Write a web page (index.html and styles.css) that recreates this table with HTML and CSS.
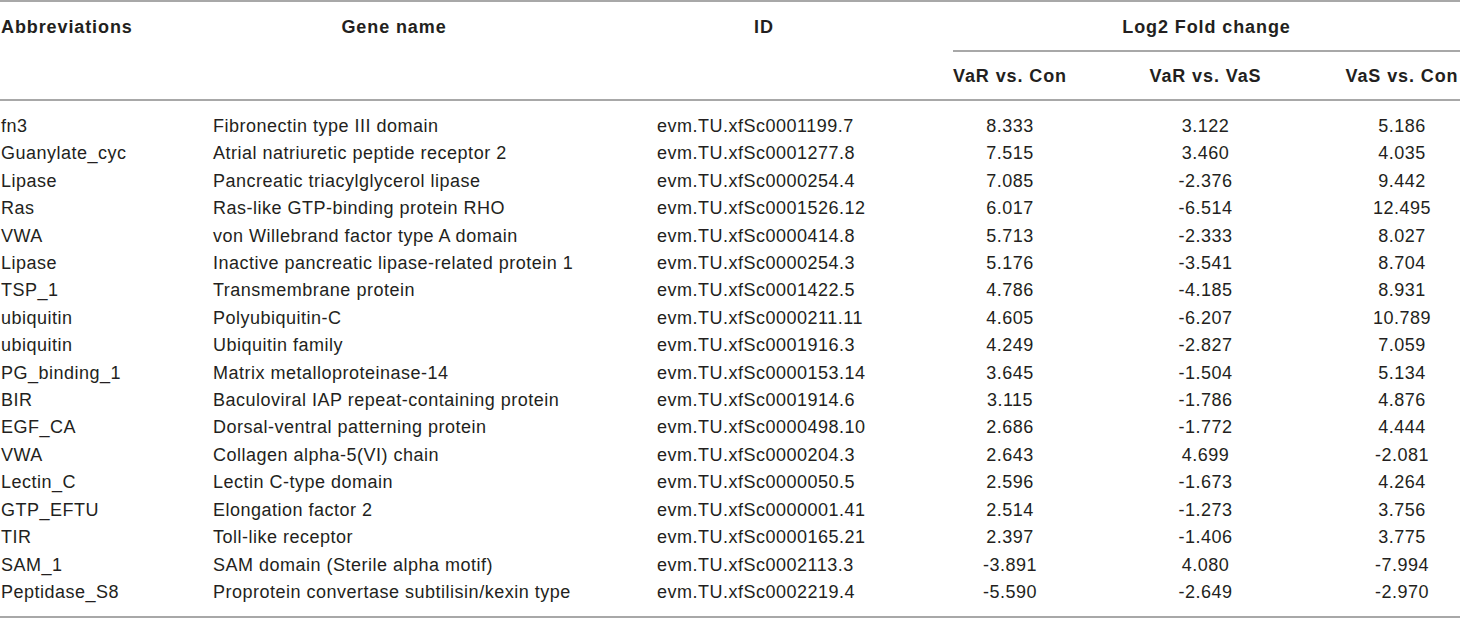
FILE: index.html
```html
<!DOCTYPE html>
<html lang="en">
<head>
    <meta charset="utf-8">
    <title>Differentially expressed genes</title>
    <link rel="stylesheet" href="styles.css">
</head>
<body>

<!-- Gene table -->
<table class="gene-table">
    <colgroup>
        <col class="c-abbr">
        <col class="c-name">
        <col class="c-id">
        <col class="c-fc1">
        <col class="c-fc2">
        <col class="c-fc3">
    </colgroup>
    <thead>
        <tr class="head-top">
            <th rowspan="2" class="abbr">Abbreviations</th>
            <th rowspan="2">Gene name</th>
            <th rowspan="2">ID</th>
            <th colspan="3" class="group">Log2 Fold change</th>
        </tr>
        <tr class="head-sub">
            <th>VaR vs. Con</th>
            <th>VaR vs. VaS</th>
            <th>VaS vs. Con</th>
        </tr>
    </thead>
    <tbody>
        <tr><td class="abbr">fn3</td><td>Fibronectin type III domain</td><td class="id">evm.TU.xfSc0001199.7</td><td class="num">8.333</td><td class="num">3.122</td><td class="num">5.186</td></tr>
        <tr><td class="abbr">Guanylate_cyc</td><td>Atrial natriuretic peptide receptor 2</td><td class="id">evm.TU.xfSc0001277.8</td><td class="num">7.515</td><td class="num">3.460</td><td class="num">4.035</td></tr>
        <tr><td class="abbr">Lipase</td><td>Pancreatic triacylglycerol lipase</td><td class="id">evm.TU.xfSc0000254.4</td><td class="num">7.085</td><td class="num">-2.376</td><td class="num">9.442</td></tr>
        <tr><td class="abbr">Ras</td><td>Ras-like GTP-binding protein RHO</td><td class="id">evm.TU.xfSc0001526.12</td><td class="num">6.017</td><td class="num">-6.514</td><td class="num">12.495</td></tr>
        <tr><td class="abbr">VWA</td><td>von Willebrand factor type A domain</td><td class="id">evm.TU.xfSc0000414.8</td><td class="num">5.713</td><td class="num">-2.333</td><td class="num">8.027</td></tr>
        <tr><td class="abbr">Lipase</td><td>Inactive pancreatic lipase-related protein 1</td><td class="id">evm.TU.xfSc0000254.3</td><td class="num">5.176</td><td class="num">-3.541</td><td class="num">8.704</td></tr>
        <tr><td class="abbr">TSP_1</td><td>Transmembrane protein</td><td class="id">evm.TU.xfSc0001422.5</td><td class="num">4.786</td><td class="num">-4.185</td><td class="num">8.931</td></tr>
        <tr><td class="abbr">ubiquitin</td><td>Polyubiquitin-C</td><td class="id">evm.TU.xfSc0000211.11</td><td class="num">4.605</td><td class="num">-6.207</td><td class="num">10.789</td></tr>
        <tr><td class="abbr">ubiquitin</td><td>Ubiquitin family</td><td class="id">evm.TU.xfSc0001916.3</td><td class="num">4.249</td><td class="num">-2.827</td><td class="num">7.059</td></tr>
        <tr><td class="abbr">PG_binding_1</td><td>Matrix metalloproteinase-14</td><td class="id">evm.TU.xfSc0000153.14</td><td class="num">3.645</td><td class="num">-1.504</td><td class="num">5.134</td></tr>
        <tr><td class="abbr">BIR</td><td>Baculoviral IAP repeat-containing protein</td><td class="id">evm.TU.xfSc0001914.6</td><td class="num">3.115</td><td class="num">-1.786</td><td class="num">4.876</td></tr>
        <tr><td class="abbr">EGF_CA</td><td>Dorsal-ventral patterning protein</td><td class="id">evm.TU.xfSc0000498.10</td><td class="num">2.686</td><td class="num">-1.772</td><td class="num">4.444</td></tr>
        <tr><td class="abbr">VWA</td><td>Collagen alpha-5(VI) chain</td><td class="id">evm.TU.xfSc0000204.3</td><td class="num">2.643</td><td class="num">4.699</td><td class="num">-2.081</td></tr>
        <tr><td class="abbr">Lectin_C</td><td>Lectin C-type domain</td><td class="id">evm.TU.xfSc0000050.5</td><td class="num">2.596</td><td class="num">-1.673</td><td class="num">4.264</td></tr>
        <tr><td class="abbr">GTP_EFTU</td><td>Elongation factor 2</td><td class="id">evm.TU.xfSc0000001.41</td><td class="num">2.514</td><td class="num">-1.273</td><td class="num">3.756</td></tr>
        <tr><td class="abbr">TIR</td><td>Toll-like receptor</td><td class="id">evm.TU.xfSc0000165.21</td><td class="num">2.397</td><td class="num">-1.406</td><td class="num">3.775</td></tr>
        <tr><td class="abbr">SAM_1</td><td>SAM domain (Sterile alpha motif)</td><td class="id">evm.TU.xfSc0002113.3</td><td class="num">-3.891</td><td class="num">4.080</td><td class="num">-7.994</td></tr>
        <tr><td class="abbr">Peptidase_S8</td><td>Proprotein convertase subtilisin/kexin type</td><td class="id">evm.TU.xfSc0002219.4</td><td class="num">-5.590</td><td class="num">-2.649</td><td class="num">-2.970</td></tr>
    </tbody>
</table>

</body>
</html>
```

FILE: styles.css
```css
/* General Layout */
body {
    margin: 0;
    padding: 0;
    background: #ffffff;
    color: #231f20;
    font-family: 'Liberation Sans', Arial, Helvetica, sans-serif;
}

/* Table */
.gene-table {
    width: 1460px;
    table-layout: fixed;
    border-collapse: collapse;
    border-top: 2px solid #a8a8a8;
    border-bottom: 2px solid #a8a8a8;
    font-size: 18px;
    letter-spacing: 0.5px;
    line-height: 27.4px;
}

.c-abbr { width: 213px; }
.c-name { width: 362px; }
.c-id { width: 378px; }
.c-fc1 { width: 114px; }
.c-fc2 { width: 277px; }
.c-fc3 { width: 116px; }

/* Header */
.gene-table th {
    padding: 0;
    font-weight: bold;
    letter-spacing: 0.9px;
    text-align: center;
    vertical-align: top;
    white-space: nowrap;
}

.gene-table thead {
    border-bottom: 2px solid #a8a8a8;
}

.head-top th {
    height: 50px;
    padding-top: 12px;
    box-sizing: border-box;
}

.head-top th.group {
    border-bottom: 2px solid #a8a8a8;
}

.head-sub th {
    height: 49px;
    padding-top: 11px;
    box-sizing: border-box;
}

.gene-table th.abbr {
    text-align: left;
    padding-left: 1px;
}

/* Body */
.gene-table td {
    padding: 0;
    white-space: nowrap;
    text-align: left;
}

.gene-table td.abbr {
    padding-left: 1px;
}

.gene-table td.id {
    padding-left: 82px;
}

.gene-table td.num {
    text-align: center;
}

.gene-table tbody tr:first-child td {
    padding-top: 12px;
}

.gene-table tbody tr:last-child td {
    padding-bottom: 10px;
}
```
